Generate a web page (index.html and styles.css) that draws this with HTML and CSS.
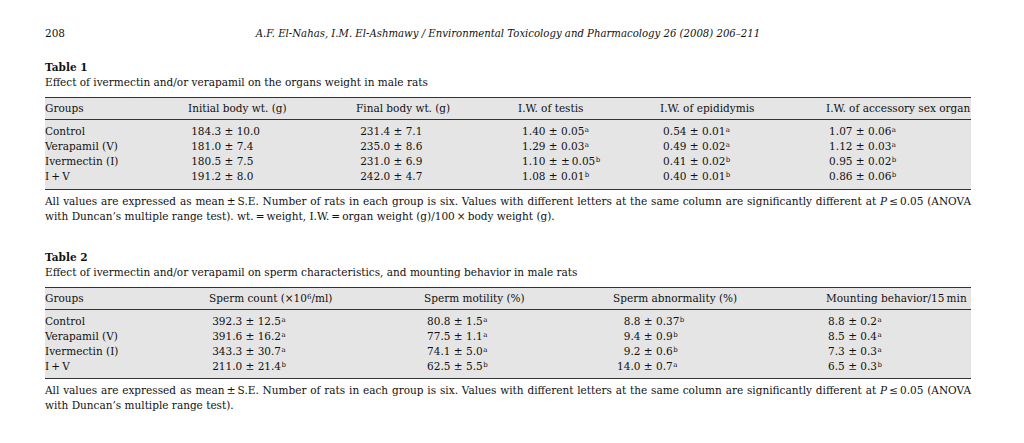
FILE: index.html
```html
<!DOCTYPE html>
<html lang="en">
<head>
<meta charset="utf-8">
<title>Environmental Toxicology and Pharmacology 26 (2008) 206–211 — page 208</title>
<link rel="stylesheet" href="styles.css">
</head>
<body>
<div class="page">
  <header class="runhead">
    <span class="pno">208</span>
    <span class="journal">A.F. El-Nahas, I.M. El-Ashmawy / Environmental Toxicology and Pharmacology 26 (2008) 206–211</span>
    <span></span>
  </header>

  <section class="tbl t1">
    <div class="label">Table 1</div>
    <div class="caption">Effect of ivermectin and/or verapamil on the organs weight in male rats</div>
    <div class="grid">
      <div class="row thead">
        <span>Groups</span>
        <span>Initial body wt. (g)</span>
        <span>Final body wt. (g)</span>
        <span>I.W. of testis</span>
        <span>I.W. of epididymis</span>
        <span>I.W. of accessory sex organ</span>
      </div>
      <div class="tbody">
        <div class="row">
          <span>Control</span>
          <span class="v p3"><span class="m w4">184.3</span> ± 10.0</span>
          <span class="v p4"><span class="m w4">231.4</span> ± 7.1</span>
          <span class="v p4"><span class="m w3">1.40</span> ± 0.05<sup>a</sup></span>
          <span class="v p3"><span class="m w3">0.54</span> ± 0.01<sup>a</sup></span>
          <span class="v p3"><span class="m w3">1.07</span> ± 0.06<sup>a</sup></span>
        </div>
        <div class="row">
          <span>Verapamil (V)</span>
          <span class="v p3"><span class="m w4">181.0</span> ± 7.4</span>
          <span class="v p4"><span class="m w4">235.0</span> ± 8.6</span>
          <span class="v p4"><span class="m w3">1.29</span> ± 0.03<sup>a</sup></span>
          <span class="v p3"><span class="m w3">0.49</span> ± 0.02<sup>a</sup></span>
          <span class="v p3"><span class="m w3">1.12</span> ± 0.03<sup>a</sup></span>
        </div>
        <div class="row">
          <span>Ivermectin (I)</span>
          <span class="v p3"><span class="m w4">180.5</span> ± 7.5</span>
          <span class="v p4"><span class="m w4">231.0</span> ± 6.9</span>
          <span class="v p4"><span class="m w3">1.10</span> ± ±&thinsp;0.05<sup>b</sup></span>
          <span class="v p3"><span class="m w3">0.41</span> ± 0.02<sup>b</sup></span>
          <span class="v p3"><span class="m w3">0.95</span> ± 0.02<sup>b</sup></span>
        </div>
        <div class="row">
          <span>I&thinsp;+&thinsp;V</span>
          <span class="v p3"><span class="m w4">191.2</span> ± 8.0</span>
          <span class="v p4"><span class="m w4">242.0</span> ± 4.7</span>
          <span class="v p4"><span class="m w3">1.08</span> ± 0.01<sup>b</sup></span>
          <span class="v p3"><span class="m w3">0.40</span> ± 0.01<sup>b</sup></span>
          <span class="v p3"><span class="m w3">0.86</span> ± 0.06<sup>b</sup></span>
        </div>
      </div>
    </div>
    <p class="foot"><span class="l1">All values are expressed as mean&thinsp;±&thinsp;S.E. Number of rats in each group is six. Values with different letters at the same column are significantly different at <i>P</i>&thinsp;≤&thinsp;0.05 (ANOVA</span><span class="l2">with Duncan’s multiple range test). wt.&thinsp;=&thinsp;weight, I.W.&thinsp;=&thinsp;organ weight (g)/100&thinsp;×&thinsp;body weight (g).</span></p>
  </section>

  <section class="tbl t2">
    <div class="label">Table 2</div>
    <div class="caption">Effect of ivermectin and/or verapamil on sperm characteristics, and mounting behavior in male rats</div>
    <div class="grid">
      <div class="row thead">
        <span>Groups</span>
        <span>Sperm count (×10<sup class="hs">6</sup>/ml)</span>
        <span>Sperm motility (%)</span>
        <span>Sperm abnormality (%)</span>
        <span>Mounting behavior/15&thinsp;min</span>
      </div>
      <div class="tbody">
        <div class="row">
          <span>Control</span>
          <span class="v p3"><span class="m w4">392.3</span> ± 12.5<sup>a</sup></span>
          <span class="v p3"><span class="m w3">80.8</span> ± 1.5<sup>a</sup></span>
          <span class="v p4"><span class="m w3">8.8</span> ± 0.37<sup>b</sup></span>
          <span class="v p2"><span class="m w2">8.8</span> ± 0.2<sup>a</sup></span>
        </div>
        <div class="row">
          <span>Verapamil (V)</span>
          <span class="v p3"><span class="m w4">391.6</span> ± 16.2<sup>a</sup></span>
          <span class="v p3"><span class="m w3">77.5</span> ± 1.1<sup>a</sup></span>
          <span class="v p4"><span class="m w3">9.4</span> ± 0.9<sup>b</sup></span>
          <span class="v p2"><span class="m w2">8.5</span> ± 0.4<sup>a</sup></span>
        </div>
        <div class="row">
          <span>Ivermectin (I)</span>
          <span class="v p3"><span class="m w4">343.3</span> ± 30.7<sup>a</sup></span>
          <span class="v p3"><span class="m w3">74.1</span> ± 5.0<sup>a</sup></span>
          <span class="v p4"><span class="m w3">9.2</span> ± 0.6<sup>b</sup></span>
          <span class="v p2"><span class="m w2">7.3</span> ± 0.3<sup>a</sup></span>
        </div>
        <div class="row">
          <span>I&thinsp;+&thinsp;V</span>
          <span class="v p3"><span class="m w4">211.0</span> ± 21.4<sup>b</sup></span>
          <span class="v p3"><span class="m w3">62.5</span> ± 5.5<sup>b</sup></span>
          <span class="v p4"><span class="m w3">14.0</span> ± 0.7<sup>a</sup></span>
          <span class="v p2"><span class="m w2">6.5</span> ± 0.3<sup>b</sup></span>
        </div>
      </div>
    </div>
    <p class="foot"><span class="l1">All values are expressed as mean&thinsp;±&thinsp;S.E. Number of rats in each group is six. Values with different letters at the same column are significantly different at <i>P</i>&thinsp;≤&thinsp;0.05 (ANOVA</span><span class="l2">with Duncan’s multiple range test).</span></p>
  </section>
</div>
</body>
</html>
```
FILE: styles.css
```css
html, body {
  margin: 0;
  padding: 0;
  background: #ffffff;
}

body {
  font-family: "DejaVu Serif", "Liberation Serif", serif;
  font-size: 10.5px;
  line-height: 15px;
  color: #111111;
}

.page {
  width: 926px;
  padding: 26px 0 0 45px;
}

.runhead {
  display: grid;
  grid-template-columns: 1fr auto 1fr;
  height: 15px;
}

.journal {
  font-style: italic;
  font-size: 10.15px;
}

.tbl {
  margin-top: 19px;
}

.t2 {
  margin-top: 27px;
}

.label {
  font-weight: bold;
}

.grid {
  margin-top: 7px;
  background: #e5e5e5;
  border-top: 1px solid #333333;
  border-bottom: 1px solid #333333;
}

.row {
  display: grid;
  white-space: nowrap;
}

.t1 .row {
  grid-template-columns: 143px 168px 162px 142px 166px 145px;
}

.t2 .row {
  grid-template-columns: 164px 215px 189px 213px 145px;
}

.thead {
  padding: 3px 0;
  border-bottom: 1px solid #333333;
}

.tbody {
  padding: 4px 0 5px;
}

.t2 .tbody {
  padding: 4px 0 4px;
}

.v.p2 { padding-left: 2px; }
.v.p3 { padding-left: 3px; }
.v.p4 { padding-left: 4px; }

.m {
  display: inline-block;
  text-align: right;
}

.m.w4 { width: 30.2px; }
.m.w3 { width: 23.5px; }
.m.w2 { width: 16.8px; }

sup {
  font-size: 7px;
  line-height: 0;
  vertical-align: 3px;
  margin-left: 0.5px;
}

sup.hs {
  margin-left: 0;
}

.foot {
  margin: 4px 0 0;
  line-height: 14.5px;
}

.foot .l1 {
  display: block;
  white-space: nowrap;
  text-align: justify;
  text-align-last: justify;
}

.foot .l2 {
  display: block;
}
```
